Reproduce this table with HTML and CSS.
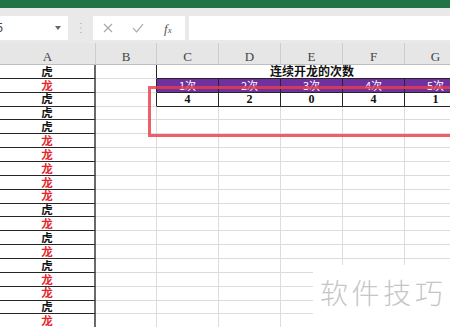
FILE: index.html
```html
<!DOCTYPE html>
<html lang="zh-CN">
<head>
<meta charset="utf-8">
<title>连续开龙的次数</title>
<link rel="stylesheet" href="styles.css">
</head>
<body>
<div class="titlebar"></div>
<div class="fbar">
  <div class="namebox"><span class="ref">G5</span><svg class="dd" width="6" height="4" viewBox="0 0 6 4"><path d="M0 0H6L3 4Z" fill="#666"/></svg></div>
  <div class="sep"><svg width="2" height="12" viewBox="0 0 2 12"><rect x="0.5" y="1" width="1" height="1" fill="#9a9a9a"/><rect x="0.5" y="5.5" width="1" height="1" fill="#9a9a9a"/><rect x="0.5" y="10" width="1" height="1" fill="#9a9a9a"/></svg></div>
  <div class="btnbox">
    <svg class="ico-x" width="10" height="10" viewBox="0 0 10 10"><path d="M1 1L9 9M9 1L1 9" stroke="#a8a8a8" stroke-width="1.1"/></svg>
    <svg class="ico-ok" width="12" height="10" viewBox="0 0 12 10"><path d="M1 5.2L4.6 8.8L11 1.2" stroke="#a8a8a8" stroke-width="1.2" fill="none"/></svg>
    <span class="fx"><i>f</i><span class="fxx">x</span></span>
  </div>
  <div class="finput"></div>
</div>
<div class="sheet">
  <div class="hd wa">A</div><div class="hd">B</div><div class="hd">C</div><div class="hd">D</div><div class="hd">E</div><div class="hd">F</div><div class="hd">G</div>

  <div class="a">虎</div><div class="edge"></div><div class="title">连续开龙的次数</div>

  <div class="a red">龙</div><div class="edge"></div><div class="lbl">1次</div><div class="lbl">2次</div><div class="lbl">3次</div><div class="lbl">4次</div><div class="lbl">5次</div>

  <div class="a">虎</div><div class="edge"></div><div class="num">4</div><div class="num">2</div><div class="num">0</div><div class="num">4</div><div class="num">1</div>

  <div class="a">虎</div><div></div><div></div><div></div><div></div><div></div><div></div>
  <div class="a">虎</div><div></div><div></div><div></div><div></div><div></div><div></div>
  <div class="a red">龙</div><div></div><div></div><div></div><div></div><div></div><div></div>
  <div class="a red">龙</div><div></div><div></div><div></div><div></div><div></div><div></div>
  <div class="a red">龙</div><div></div><div></div><div></div><div></div><div></div><div></div>
  <div class="a red">龙</div><div></div><div></div><div></div><div></div><div></div><div></div>
  <div class="a red">龙</div><div></div><div></div><div></div><div></div><div></div><div></div>
  <div class="a">虎</div><div></div><div></div><div></div><div></div><div></div><div></div>
  <div class="a red">龙</div><div></div><div></div><div></div><div></div><div></div><div></div>
  <div class="a">虎</div><div></div><div></div><div></div><div></div><div></div><div></div>
  <div class="a red">龙</div><div></div><div></div><div></div><div></div><div></div><div></div>
  <div class="a">虎</div><div></div><div></div><div></div><div></div><div></div><div></div>
  <div class="a red">龙</div><div></div><div></div><div></div><div></div><div></div><div></div>
  <div class="a red">龙</div><div></div><div></div><div></div><div></div><div></div><div></div>
  <div class="a">虎</div><div></div><div></div><div></div><div></div><div></div><div></div>
  <div class="a red">龙</div><div></div><div></div><div></div><div></div><div></div><div></div>
</div>
<div class="mark"></div>
<div class="watermark">软件技巧</div>
</body>
</html>
```
FILE: styles.css
```css
* { box-sizing: border-box; }
html, body { margin: 0; padding: 0; }
body {
  width: 450px;
  height: 327px;
  overflow: hidden;
  position: relative;
  background: #fff;
  font-family: "Noto Sans CJK SC", sans-serif;
}
.titlebar { height: 8px; background: #227447; }
.fbar {
  height: 35px;
  background: #e9e9e9;
  display: flex;
  align-items: flex-start;
  padding-top: 8px;
}
.namebox {
  margin-left: -17px;
  width: 85px;
  height: 24px;
  background: #fff;
  display: flex;
  align-items: center;
  justify-content: space-between;
  padding: 0 7px 0 4px;
  font: 12px "Liberation Sans", sans-serif;
  color: #444;
  flex: none;
}
.sep {
  width: 25px;
  height: 24px;
  display: flex;
  align-items: center;
  justify-content: center;
  flex: none;
}
.btnbox {
  width: 92px;
  height: 24px;
  background: #fff;
  display: flex;
  align-items: center;
  flex: none;
}
.ico-x { margin-left: 10px; }
.ico-ok { margin-left: 19px; }
.fx {
  margin-left: 20px;
  font-family: "Liberation Serif", serif;
  font-size: 13px;
  color: #555;
  line-height: 1;
}
.fxx { font-size: 9px; font-style: italic; }
.finput {
  margin-left: 4px;
  flex: 1;
  height: 24px;
  background: #fff;
}
.sheet {
  display: grid;
  grid-template-columns: 96px 61px 62px 62px 62px 62px 62px;
  grid-template-rows: 22px repeat(19, 13.86px);
  width: max-content;
}
.sheet > div {
  border-right: 1px solid #dcdcdc;
  border-bottom: 1px solid #dcdcdc;
  display: flex;
  align-items: center;
  justify-content: center;
  font-size: 12px;
  line-height: 1;
}
.sheet > .hd {
  background: #e6e6e6;
  border-right: 1px solid #cdcdcd;
  border-bottom: 1px solid #bdbdbd;
  align-items: flex-end;
  padding-bottom: 1px;
  font-family: "Liberation Serif", serif;
  font-size: 13px;
  color: #444;
}
.sheet > .a {
  border-bottom: 1px solid #262626;
  border-right: 2px solid #6a6a6a;
  font-weight: 700;
  font-size: 11.5px;
  color: #111;
}
.sheet > .a.red { color: #e3262c; }
.sheet > .edge { border-right: 1px solid #262626; }
.sheet > .title {
  grid-column: span 5;
  border-right: none;
  border-bottom: 1px solid #262626;
  font-weight: 700;
  color: #111;
}
.sheet > .lbl {
  background: #7030a0;
  color: #fff;
  border-right: 1px solid #262626;
  border-bottom: 1px solid #262626;
  font-size: 11px;
}
.sheet > .num {
  border-right: 1px solid #262626;
  border-bottom: 1px solid #262626;
  font-family: "Liberation Serif", serif;
  font-weight: 700;
  font-size: 12px;
  color: #111;
}
.mark {
  position: absolute;
  left: 148px;
  top: 86px;
  width: 330px;
  height: 51px;
  border: 3px solid rgba(232, 62, 72, 0.82);
}
.watermark {
  position: absolute;
  left: 313px;
  top: 265px;
  right: 0;
  bottom: 0;
  background: #fff;
  display: flex;
  align-items: center;
  padding: 0 0 8px 7px;
  font-size: 28px;
  font-weight: 300;
  letter-spacing: 3.6px;
  color: #c6c6c6;
  white-space: nowrap;
}
```
